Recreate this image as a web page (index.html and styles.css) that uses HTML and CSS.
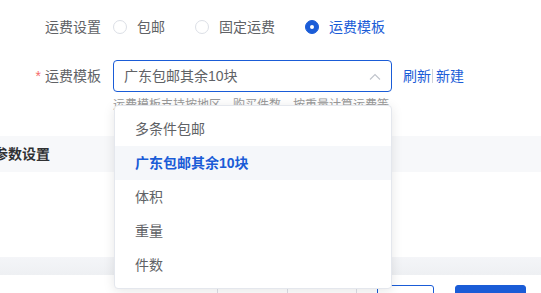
FILE: index.html
```html
<!DOCTYPE html>
<html lang="zh-CN">
<head>
  <meta charset="UTF-8" />
  <meta name="viewport" content="width=device-width, initial-scale=1.0"/>
  <title>运费设置</title>
  <link rel="stylesheet" href="styles.css">
</head>
<body>
  <div class="page">
    <!-- 运费表单 -->
    <div class="form">
      <div class="form-item">
        <label class="form-label">运费设置</label>
        <div class="form-content radios">
          <label class="radio"><span class="radio-input"></span><span class="radio-label">包邮</span></label>
          <label class="radio"><span class="radio-input"></span><span class="radio-label">固定运费</span></label>
          <label class="radio is-checked"><span class="radio-input"></span><span class="radio-label">运费模板</span></label>
        </div>
      </div>

      <div class="form-item form-item-top">
        <label class="form-label is-required">运费模板</label>
        <div class="form-content">
          <div class="select-row">
            <div class="select">
              <div class="select-box">
                <span class="select-value">广东包邮其余10块</span>
                <svg class="select-arrow" width="12" height="7" viewBox="0 0 12 7">
                  <path d="M1 6.5 L6 1.5 L11 6.5" fill="none" stroke="#c0c4cc" stroke-width="1.1"/>
                </svg>
              </div>
              <ul class="dropdown">
                <li>多条件包邮</li>
                <li class="selected">广东包邮其余10块</li>
                <li>体积</li>
                <li>重量</li>
                <li>件数</li>
              </ul>
            </div>
            <div class="links">
              <a>刷新</a><span class="divider"></span><a>新建</a>
            </div>
          </div>
          <div class="hint">运费模板支持按地区，购买件数，按重量计算运费等</div>
        </div>
      </div>
    </div>

    <!-- 参数设置 -->
    <div class="section-title">参数设置</div>
    <div class="section-body"></div>

    <div class="band"></div>
    <div class="footer">
      <div class="pager"><span class="pager-cell"></span><span class="pager-cell"></span></div>
      <button class="btn btn-plain"></button>
      <button class="btn btn-primary"></button>
    </div>
  </div>
</body>
</html>
```

FILE: styles.css
```css
:root {
  --blue: #1a5cd7;
  --text: #606266;
  --border: #dcdfe6;
}

* {
  box-sizing: border-box;
}

body {
  margin: 0;
  font-family: "Liberation Sans", "Noto Sans CJK SC", sans-serif;
  font-size: 14px;
  color: var(--text);
  background: #fff;
  overflow: hidden;
}

.page {
  width: 541px;
  height: 293px;
  overflow: hidden;
}

.form {
  padding-top: 11px;
}

.form-item {
  display: flex;
  align-items: flex-start;
}

.form-item-top {
  margin-top: 17px;
}

.form-label {
  width: 113px;
  padding-right: 12px;
  text-align: right;
  line-height: 32px;
  flex-shrink: 0;
}

.form-label.is-required::before {
  content: "*";
  color: #f56c6c;
  margin-right: 4px;
}

.form-content {
  line-height: 32px;
}

.radios {
  display: flex;
  align-items: center;
  height: 32px;
}

.radio {
  display: flex;
  align-items: center;
  margin-right: 30px;
  cursor: pointer;
}

.radio-input {
  width: 14px;
  height: 14px;
  border: 1px solid var(--border);
  border-radius: 50%;
  background: #fff;
  position: relative;
}

.radio-label {
  padding-left: 10px;
}

.radio.is-checked .radio-input {
  border-color: var(--blue);
  background: var(--blue);
}

.radio.is-checked .radio-input::after {
  content: "";
  position: absolute;
  left: 50%;
  top: 50%;
  width: 4px;
  height: 4px;
  margin: -2px 0 0 -2px;
  border-radius: 50%;
  background: #fff;
}

.radio.is-checked .radio-label {
  color: var(--blue);
}

.select-row {
  display: flex;
  align-items: center;
}

.select {
  position: relative;
  width: 279px;
}

.select-box {
  height: 32px;
  border: 1px solid var(--blue);
  border-radius: 4px;
  padding: 0 10px;
  display: flex;
  align-items: center;
  justify-content: space-between;
}

.select-arrow {
  display: block;
}

.dropdown {
  position: absolute;
  top: 45px;
  left: 1px;
  width: 278px;
  margin: 0;
  padding: 6px 0;
  list-style: none;
  background: #fff;
  border: 1px solid #e4e7ed;
  border-radius: 4px;
  box-shadow: 0 2px 12px rgba(0, 0, 0, 0.1);
  z-index: 10;
}

.dropdown li {
  height: 34px;
  line-height: 34px;
  padding: 0 20px;
  color: var(--text);
}

.dropdown li.selected {
  background: #f5f7fa;
  color: var(--blue);
  font-weight: bold;
}

.links {
  display: flex;
  align-items: center;
  margin-left: 11px;
  color: var(--blue);
}

.links a {
  cursor: pointer;
}

.links .divider {
  width: 1px;
  height: 14px;
  background: #d0d3da;
  margin: 0 3px 0 1px;
}

.hint {
  margin-top: 4px;
  font-size: 12px;
  line-height: 18px;
  color: #999;
}

.section-title {
  margin-top: 22px;
  height: 36px;
  line-height: 36px;
  background: #f7f8fa;
  color: #303133;
  font-weight: bold;
  padding-left: 0;
  text-indent: -6px;
}

.section-body {
  height: 85px;
}

.band {
  height: 18px;
  background: linear-gradient(#f4f5f8, #eef0f3);
}

.footer {
  display: flex;
  justify-content: flex-end;
  align-items: flex-start;
  padding: 10px 15px 0 0;
  height: 60px;
}

.pager {
  display: flex;
  width: 140px;
  height: 32px;
  border-left: 1px solid var(--border);
  border-right: 1px solid var(--border);
}

.pager-cell {
  width: 70px;
  height: 32px;
}

.pager-cell + .pager-cell {
  border-left: 1px solid var(--border);
}

.btn {
  height: 32px;
  border-radius: 3px;
  padding: 0;
  font-family: inherit;
}

.btn-plain {
  width: 57px;
  margin-left: 20px;
  border: 1px solid var(--blue);
  background: #fff;
}

.btn-primary {
  width: 71px;
  margin-left: 21px;
  border: 1px solid var(--blue);
  background: var(--blue);
}
```
